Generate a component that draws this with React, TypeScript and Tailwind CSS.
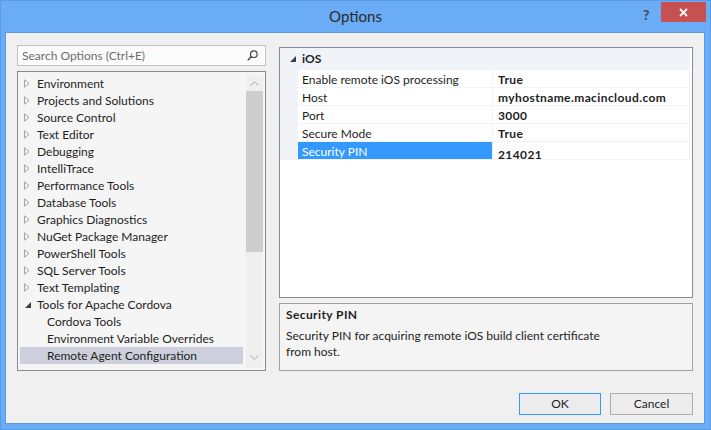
import React from "react";

const treeItems: { label: string; kind: "closed" | "open" | "child"; selected?: boolean }[] = [
  { label: "Environment", kind: "closed" },
  { label: "Projects and Solutions", kind: "closed" },
  { label: "Source Control", kind: "closed" },
  { label: "Text Editor", kind: "closed" },
  { label: "Debugging", kind: "closed" },
  { label: "IntelliTrace", kind: "closed" },
  { label: "Performance Tools", kind: "closed" },
  { label: "Database Tools", kind: "closed" },
  { label: "Graphics Diagnostics", kind: "closed" },
  { label: "NuGet Package Manager", kind: "closed" },
  { label: "PowerShell Tools", kind: "closed" },
  { label: "SQL Server Tools", kind: "closed" },
  { label: "Text Templating", kind: "closed" },
  { label: "Tools for Apache Cordova", kind: "open" },
  { label: "Cordova Tools", kind: "child" },
  { label: "Environment Variable Overrides", kind: "child" },
  { label: "Remote Agent Configuration", kind: "child", selected: true },
];

const props = [
  { name: "Enable remote iOS processing", value: "True" },
  { name: "Host", value: "myhostname.macincloud.com" },
  { name: "Port", value: "3000" },
  { name: "Secure Mode", value: "True" },
  { name: "Security PIN", value: "214021", selected: true },
];

function ClosedArrow() {
  return (
    <svg width="6" height="9" viewBox="0 0 6 9" className="shrink-0">
      <path d="M0.5 0.8 L5 4.5 L0.5 8.2 Z" fill="none" stroke="#a3a3a3" strokeWidth="1" />
    </svg>
  );
}

function OpenArrow() {
  return (
    <svg width="6" height="6" viewBox="0 0 6 6" className="shrink-0">
      <path d="M6 0 L6 6 L0 6 Z" fill="#404040" />
    </svg>
  );
}

function Chevron({ up }: { up?: boolean }) {
  return (
    <svg width="9" height="5" viewBox="0 0 9 5">
      <path
        d={up ? "M0.5 4.5 L4.5 0.8 L8.5 4.5" : "M0.5 0.5 L4.5 4.2 L8.5 0.5"}
        fill="none"
        stroke="#a6a6a6"
        strokeWidth="1"
      />
    </svg>
  );
}

function TreeRow({ item }: { item: (typeof treeItems)[number] }) {
  return (
    <div
      className={`flex h-[17px] items-center whitespace-nowrap ${
        item.selected ? "bg-[#cdd0dc]" : ""
      }`}
    >
      {item.kind === "closed" && (
        <div className="flex w-[17px] justify-start pl-[4px]">
          <ClosedArrow />
        </div>
      )}
      {item.kind === "open" && (
        <div className="flex w-[17px] justify-start pl-[5px]">
          <OpenArrow />
        </div>
      )}
      {item.kind === "child" && <div className="w-[27px]" />}
      <span>{item.label}</span>
    </div>
  );
}

export default function App() {
  return (
    <div className="flex h-[430px] w-[711px] flex-col border border-[#5a9ae6] bg-[#6aacf5] font-['Lato','Liberation_Sans',sans-serif] text-[12px] text-[#1e1e1e]">
      {/* title bar */}
      <div className="relative flex h-[31px] items-center justify-center">
        <span className="mb-[1px] text-[15px] text-[#2a2a2a]">Options</span>
        <span className="absolute left-[642px] top-[3px] text-[14px] font-bold text-[#454545]">?</span>
        <div className="absolute left-[660px] top-[1px] flex h-[20px] w-[45px] items-center justify-center bg-[#c75050]">
          <svg width="9" height="9" viewBox="0 0 9 9">
            <path d="M1 1 L8 8 M8 1 L1 8" stroke="#fff" strokeWidth="1.8" />
          </svg>
        </div>
      </div>

      {/* client area */}
      <div className="ml-[4px] flex h-[392px] w-[700px] border border-[#5a9ae6] bg-[#f0f0f0]">
        <div className="ml-[11px] mt-[12px] flex w-[249px] flex-col gap-[5px]">
          <div className="flex h-[21px] items-center justify-between border border-[#c2c2c2] bg-[#fbfbfb] pl-[4px] pr-[7px]">
            <span className="text-[#6d6d6d]">Search Options (Ctrl+E)</span>
            <svg width="11" height="11" viewBox="0 0 11 11">
              <circle cx="6.8" cy="4.2" r="3.3" fill="none" stroke="#444" strokeWidth="1.2" />
              <path d="M4.4 6.6 L0.8 10.2" stroke="#444" strokeWidth="1.4" />
            </svg>
          </div>
          <div className="flex h-[300px] border border-[#868a92] bg-[#f5f5f5] pb-[2px] pl-[2px] pr-[2px] pt-[3px]">
            <div className="flex-1 pr-[3px]">
              {treeItems.map((it) => (
                <TreeRow key={it.label} item={it} />
              ))}
            </div>
            <div className="flex w-[17px] flex-col bg-[#efefef]">
              <div className="flex h-[16px] items-center justify-center">
                <Chevron up />
              </div>
              <div className="h-[161px] bg-[#cdcdcd]" />
              <div className="flex-1" />
              <div className="mb-[3px] flex h-[16px] items-center justify-center">
                <Chevron />
              </div>
            </div>
          </div>
        </div>

        <div className="ml-[13px] mt-[14px] flex w-[414px] flex-col">
          {/* property grid */}
          <div className="h-[251px] border border-[#868a92] bg-white pr-[2px]">
            <div className="flex h-[22px] items-center bg-[#f0f3f8]">
              <div className="flex w-[18px] justify-end pr-[2px]">
                <OpenArrow />
              </div>
              <span className="ml-[4px] font-bold">iOS</span>
            </div>
            {props.map((p) => (
              <div key={p.name} className="flex h-[18px] leading-[17px]">
                <div className="w-[18px] bg-[#f0f3f8]" />
                <div
                  className={`w-[194px] border-b border-[#f0f3f8] pl-[4px] pt-[1px] ${
                    p.selected ? "bg-[#3399ff] text-white" : ""
                  }`}
                >
                  {p.name}
                </div>
                <div
                  className={`flex-1 whitespace-nowrap border-b border-l border-r border-[#f0f3f8] pl-[5px] font-bold tracking-[0.4px] ${
                    p.selected ? "pt-[4px]" : "pt-[1px]"
                  }`}
                >
                  {p.value}
                </div>
              </div>
            ))}
          </div>

          {/* description */}
          <div className="mt-[5px] h-[68px] border border-[#a0a0a0] bg-[#f4f4f4] pl-[6px] pt-[3px] leading-[16px]">
            <div className="font-bold tracking-[0.4px]">Security PIN</div>
            <div className="mt-[5px]">
              Security PIN for acquiring remote iOS build client certificate
              <br />
              from host.
            </div>
          </div>

          {/* buttons */}
          <div className="mt-[22px] flex justify-end gap-[9px]">
            <div className="flex h-[22px] w-[82px] items-center justify-center border border-[#3399ff] bg-[#ececec]">
              OK
            </div>
            <div className="flex h-[22px] w-[83px] items-center justify-center border border-[#acacac] bg-[#ececec]">
              Cancel
            </div>
          </div>
        </div>
      </div>
    </div>
  );
}
